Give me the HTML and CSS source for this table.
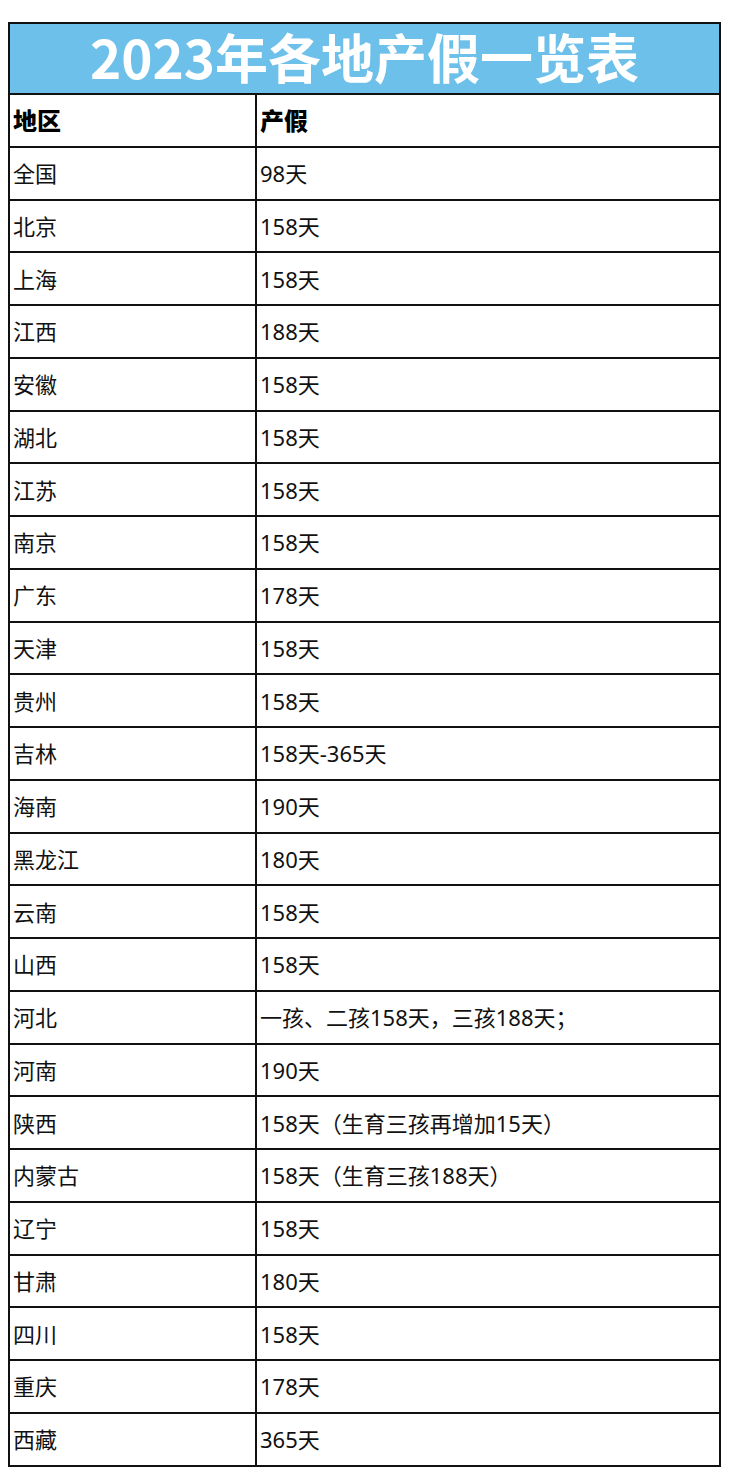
FILE: index.html
```html
<!DOCTYPE html>
<html lang="zh-CN">
<head>
<meta charset="utf-8">
<title>2023年各地产假一览表</title>
<link rel="stylesheet" href="styles.css">
</head>
<body>
<table class="sheet">
  <colgroup><col class="c1"><col class="c2"></colgroup>
  <thead>
    <tr class="title"><th colspan="2">2023年各地产假一览表</th></tr>
    <tr class="head"><th>地区</th><th>产假</th></tr>
  </thead>
  <tbody>
    <tr><td>全国</td><td>98天</td></tr>
    <tr><td>北京</td><td>158天</td></tr>
    <tr><td>上海</td><td>158天</td></tr>
    <tr><td>江西</td><td>188天</td></tr>
    <tr><td>安徽</td><td>158天</td></tr>
    <tr><td>湖北</td><td>158天</td></tr>
    <tr><td>江苏</td><td>158天</td></tr>
    <tr><td>南京</td><td>158天</td></tr>
    <tr><td>广东</td><td>178天</td></tr>
    <tr><td>天津</td><td>158天</td></tr>
    <tr><td>贵州</td><td>158天</td></tr>
    <tr><td>吉林</td><td>158天-365天</td></tr>
    <tr><td>海南</td><td>190天</td></tr>
    <tr><td>黑龙江</td><td>180天</td></tr>
    <tr><td>云南</td><td>158天</td></tr>
    <tr><td>山西</td><td>158天</td></tr>
    <tr><td>河北</td><td>一孩、二孩158天，三孩188天；</td></tr>
    <tr><td>河南</td><td>190天</td></tr>
    <tr><td>陕西</td><td>158天（生育三孩再增加15天）</td></tr>
    <tr><td>内蒙古</td><td>158天（生育三孩188天）</td></tr>
    <tr><td>辽宁</td><td>158天</td></tr>
    <tr><td>甘肃</td><td>180天</td></tr>
    <tr><td>四川</td><td>158天</td></tr>
    <tr><td>重庆</td><td>178天</td></tr>
    <tr><td>西藏</td><td>365天</td></tr>
  </tbody>
</table>
</body>
</html>
```

FILE: styles.css
```css
html, body {
  margin: 0;
  padding: 0;
  background: #ffffff;
}

body {
  font-family: "Noto Sans", "Noto Sans CJK SC", sans-serif;
  color: #111111;
}

.sheet {
  margin: 22px 0 0 8px;
  width: 713px;
  border-collapse: collapse;
  table-layout: fixed;
}

.c1 { width: 247px; }

.sheet th,
.sheet td {
  border: 2px solid #111111;
  padding: 0 0 0 3px;
  text-align: left;
  vertical-align: middle;
  font-size: 22px;
  line-height: 1;
  height: 52.75px;
  box-sizing: border-box;
  white-space: nowrap;
}

.sheet .head th {
  font-family: "Noto Sans CJK SC", sans-serif;
  font-size: 24px;
  font-weight: 900;
  color: #000000;
}

.sheet .title th {
  font-family: "Noto Sans CJK SC", sans-serif;
  background: #6cc0ea;
  color: #ffffff;
  font-size: 53px;
  font-weight: 700;
  text-align: center;
  padding: 0 0 4px 0;
  height: 71px;
}
```
